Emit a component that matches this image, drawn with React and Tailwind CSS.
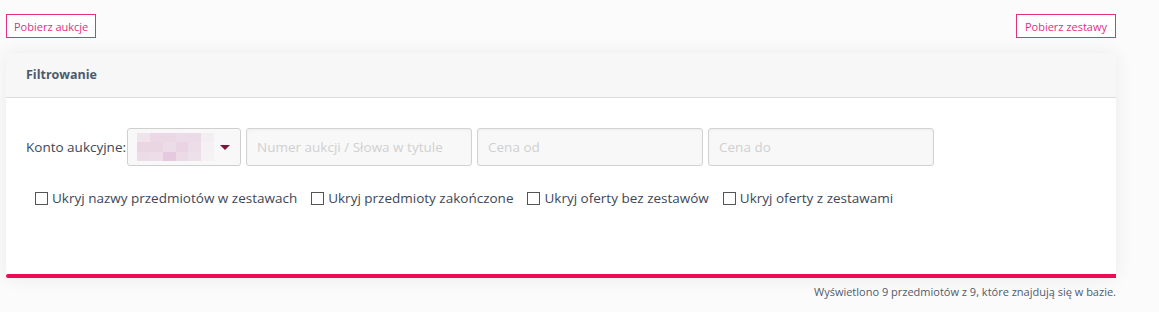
import React from 'react';

const checks = [
  'Ukryj nazwy przedmiotów w zestawach',
  'Ukryj przedmioty zakończone',
  'Ukryj oferty bez zestawów',
  'Ukryj oferty z zestawami',
];

const App = () => {
  return (
    <div className="min-h-[312px] w-[1159px] bg-[#fbfbfb] font-['Open_Sans',sans-serif]">
      <div className="w-[1110px] ml-[6px] pt-[14px]">
        <div className="flex justify-between">
          <button className="h-[24px] px-[7px] border border-[#e0307f] text-[#e0307f] text-[11px] bg-white leading-none">
            Pobierz aukcje
          </button>
          <button className="h-[24px] px-[8px] border border-[#e0307f] text-[#e0307f] text-[11px] bg-white leading-none">
            Pobierz zestawy
          </button>
        </div>

        {/* Filter card */}
        <div className="mt-[15px] rounded-t-[4px] bg-white shadow-[0_0_18px_rgba(0,0,0,0.07)]">
          <div className="h-[45px] bg-[#f7f7f7] border-b border-[#dcdcdc] flex items-center px-[20px] rounded-t-[4px]">
            <h3 className="text-[12.5px] font-bold text-[#4d5a6e]">Filtrowanie</h3>
          </div>
          <div className="h-[176px] pt-[30px] px-[20px]">
            <div className="flex items-center">
              <span className="text-[13.5px] text-[#3d4758] mr-[1px]">Konto aukcyjne:</span>
              <div className="w-[114px] h-[38px] border border-[#cfcfcf] rounded-[3px] bg-[#f8f8f8] flex items-center pl-[9px] pr-[10px]">
                <div className="w-[77px] h-[28px] grid grid-cols-6 grid-rows-3 blur-[0.5px]">
                  <div className="bg-[#efe4ec]" />
                  <div className="bg-[#ecd7e6]" />
                  <div className="bg-[#ead8e5]" />
                  <div className="bg-[#ecdbe8]" />
                  <div className="bg-[#ebdae7]" />
                  <div className="bg-[#f3eef2]" />
                  <div className="bg-[#ead6e3]" />
                  <div className="bg-[#e9d6e2]" />
                  <div className="bg-[#ecdce7]" />
                  <div className="bg-[#ead4e4]" />
                  <div className="bg-[#ecdde8]" />
                  <div className="bg-[#f4f0f3]" />
                  <div className="bg-[#ecdce8]" />
                  <div className="bg-[#eddde9]" />
                  <div className="bg-[#e6c9df]" />
                  <div className="bg-[#ecdbe7]" />
                  <div className="bg-[#eee0ea]" />
                  <div className="bg-[#f5f2f4]" />
                </div>
                <span className="ml-auto w-0 h-0 border-l-[5px] border-r-[5px] border-t-[5px] border-l-transparent border-r-transparent border-t-[#7d1538]" />
              </div>
              {['Numer aukcji / Słowa w tytule', 'Cena od', 'Cena do'].map((ph) => (
                <input
                  key={ph}
                  type="text"
                  placeholder={ph}
                  className="ml-[5px] w-[226px] h-[38px] border border-[#d3d3d3] rounded-[3px] bg-[#f8f8f8] shadow-[inset_0_1px_3px_rgba(0,0,0,0.05)] px-[10px] text-[13.5px] placeholder:text-[#d0d0d0] outline-none"
                />
              ))}
            </div>
            <div className="flex items-center gap-[14px] mt-[22px] pl-[9px]">
              {checks.map((c) => (
                <label key={c} className="flex items-center gap-[4px] text-[13.5px] text-[#3d4758]">
                  <span className="w-[13px] h-[13px] border-[1.5px] border-[#555] bg-white" />
                  {c}
                </label>
              ))}
            </div>
          </div>
          <div className="h-[4px] bg-[#ee0a55] rounded-l-[2px]" />
        </div>

        <p className="text-right text-[11px] text-[#4f5a6c] mt-[6px]">
          Wyświetlono 9 przedmiotów z 9, które znajdują się w bazie.
        </p>
      </div>
    </div>
  );
};

export default App;
